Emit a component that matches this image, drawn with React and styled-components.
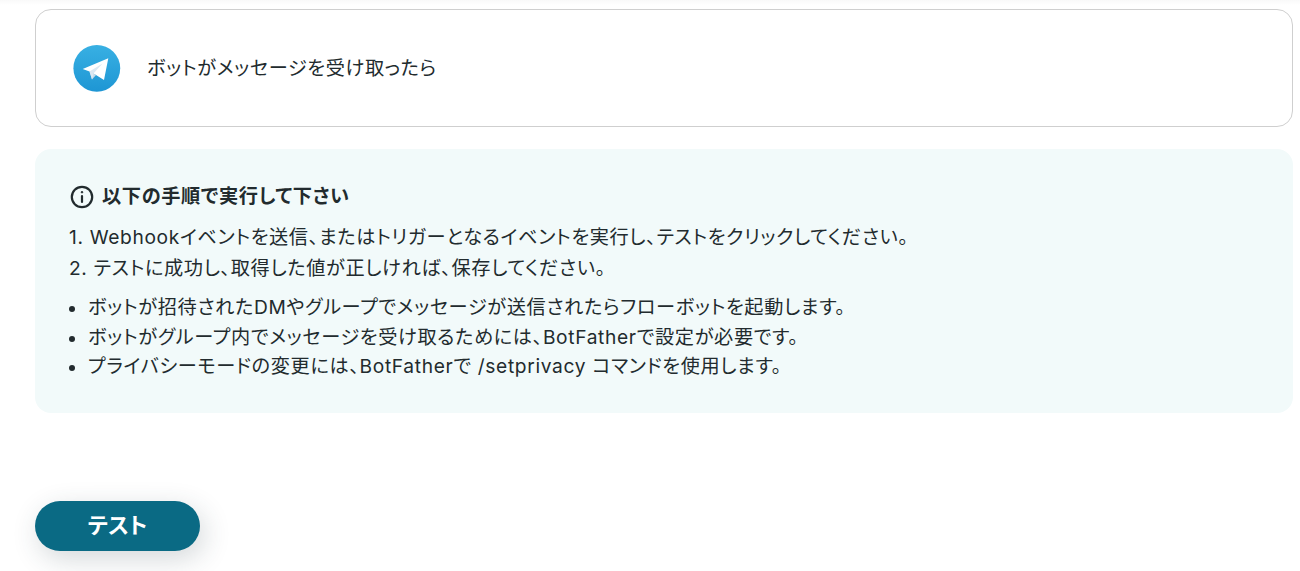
import React from "react";
import styled, { createGlobalStyle } from "styled-components";

const FONT = `Inter, "Noto Sans CJK JP", sans-serif`;
const TEXT = "#222b2e";

const GlobalStyle = createGlobalStyle`
  html, body {
    margin: 0;
    padding: 0;
    background: #fff;
  }
  body {
    font-family: ${FONT};
    color: ${TEXT};
    font-feature-settings: "palt";
    letter-spacing: 0.04em;
    overflow: hidden;
  }
`;

const Page = styled.div`
  height: 571px;
  box-sizing: border-box;
  padding: 9px 7px 20px 35px;
  display: flex;
  flex-direction: column;
  background: linear-gradient(#f9f9f9 0, #fff 5px);
`;

const TriggerCard = styled.div`
  height: 118px;
  box-sizing: border-box;
  display: flex;
  align-items: center;
  gap: 26px;
  padding-left: 37px;
  background: #fff;
  border: 1px solid #cfcfcf;
  border-radius: 16px;
`;

const TriggerLabel = styled.span`
  font-size: 19.2px;
  line-height: 28px;
`;

const InfoBox = styled.div`
  margin-top: 22px;
  height: 264px;
  box-sizing: border-box;
  padding: 35px 36px;
  background: #f2fafa;
  border-radius: 16px;
`;

const InfoTitle = styled.div`
  display: flex;
  align-items: center;
  gap: 8px;
  height: 26px;
  margin-left: -1px;
  font-size: 19.2px;
  font-weight: 700;
`;

const TitleText = styled.span`
  padding-bottom: 2px;
  line-height: 24px;
`;

const Steps = styled.ol`
  margin: 12px 0 0 -2px;
  padding: 0;
  list-style: none;
  font-size: 19.2px;
  line-height: 31px;
`;

const Notes = styled.ul`
  margin: 9px 0 0;
  padding: 0 0 0 17px;
  list-style: none;
  font-size: 19.2px;
  line-height: 29.5px;
`;

const Note = styled.li`
  position: relative;
  &::before {
    content: "";
    position: absolute;
    left: -19px;
    top: 13px;
    width: 6px;
    height: 6px;
    border-radius: 50%;
    background: ${TEXT};
  }
`;

const Footer = styled.div`
  margin-top: auto;
`;

const TestButton = styled.button`
  display: block;
  width: 165px;
  height: 50px;
  padding: 0 0 7px;
  border: none;
  border-radius: 25px;
  background: #0a6a84;
  color: #fff;
  font-family: ${FONT};
  font-feature-settings: "palt";
  font-size: 22px;
  font-weight: 700;
  box-shadow: 4px 8px 28px rgba(40, 60, 70, 0.2);
`;

function TelegramIcon() {
  return (
    <svg width="48" height="48" viewBox="0 0 48 48">
      <defs>
        <linearGradient id="tg" x1="0" y1="0" x2="0" y2="1">
          <stop offset="0" stopColor="#38b0e3" />
          <stop offset="1" stopColor="#1e96d4" />
        </linearGradient>
      </defs>
      <circle cx="23.8" cy="24.3" r="23.4" fill="url(#tg)" />
      <path d="M9.7 25 35.3 14.3 31 36 23 31 16.5 27.6Z" fill="#fff" />
      <path d="M16.5 27.6 19 35.4 23 31 20.5 29.6Z" fill="#c8dcea" />
      <path d="M16.5 27.6 29.5 19.5 20.5 29.6 19 35.4Z" fill="#dbe8f2" />
    </svg>
  );
}

function InfoIcon() {
  return (
    <svg width="24" height="24" viewBox="0 0 24 24" fill="none" stroke={TEXT} strokeWidth="2.2">
      <circle cx="12" cy="12" r="10.2" />
      <path d="M12 11v6" strokeLinecap="round" />
      <circle cx="12" cy="7.2" r="0.8" fill={TEXT} strokeWidth="1" />
    </svg>
  );
}

export default function App() {
  return (
    <Page>
      <GlobalStyle />
      <TriggerCard>
        <TelegramIcon />
        <TriggerLabel>ボットがメッセージを受け取ったら</TriggerLabel>
      </TriggerCard>
      <InfoBox>
        <InfoTitle>
          <InfoIcon />
          <TitleText>以下の手順で実行して下さい</TitleText>
        </InfoTitle>
        <Steps>
          <li>1. Webhookイベントを送信、またはトリガーとなるイベントを実行し、テストをクリックしてください。</li>
          <li>2. テストに成功し、取得した値が正しければ、保存してください。</li>
        </Steps>
        <Notes>
          <Note>ボットが招待されたDMやグループでメッセージが送信されたらフローボットを起動します。</Note>
          <Note>ボットがグループ内でメッセージを受け取るためには、BotFatherで設定が必要です。</Note>
          <Note>プライバシーモードの変更には、BotFatherで /setprivacy コマンドを使用します。</Note>
        </Notes>
      </InfoBox>
      <Footer>
        <TestButton>テスト</TestButton>
      </Footer>
    </Page>
  );
}
